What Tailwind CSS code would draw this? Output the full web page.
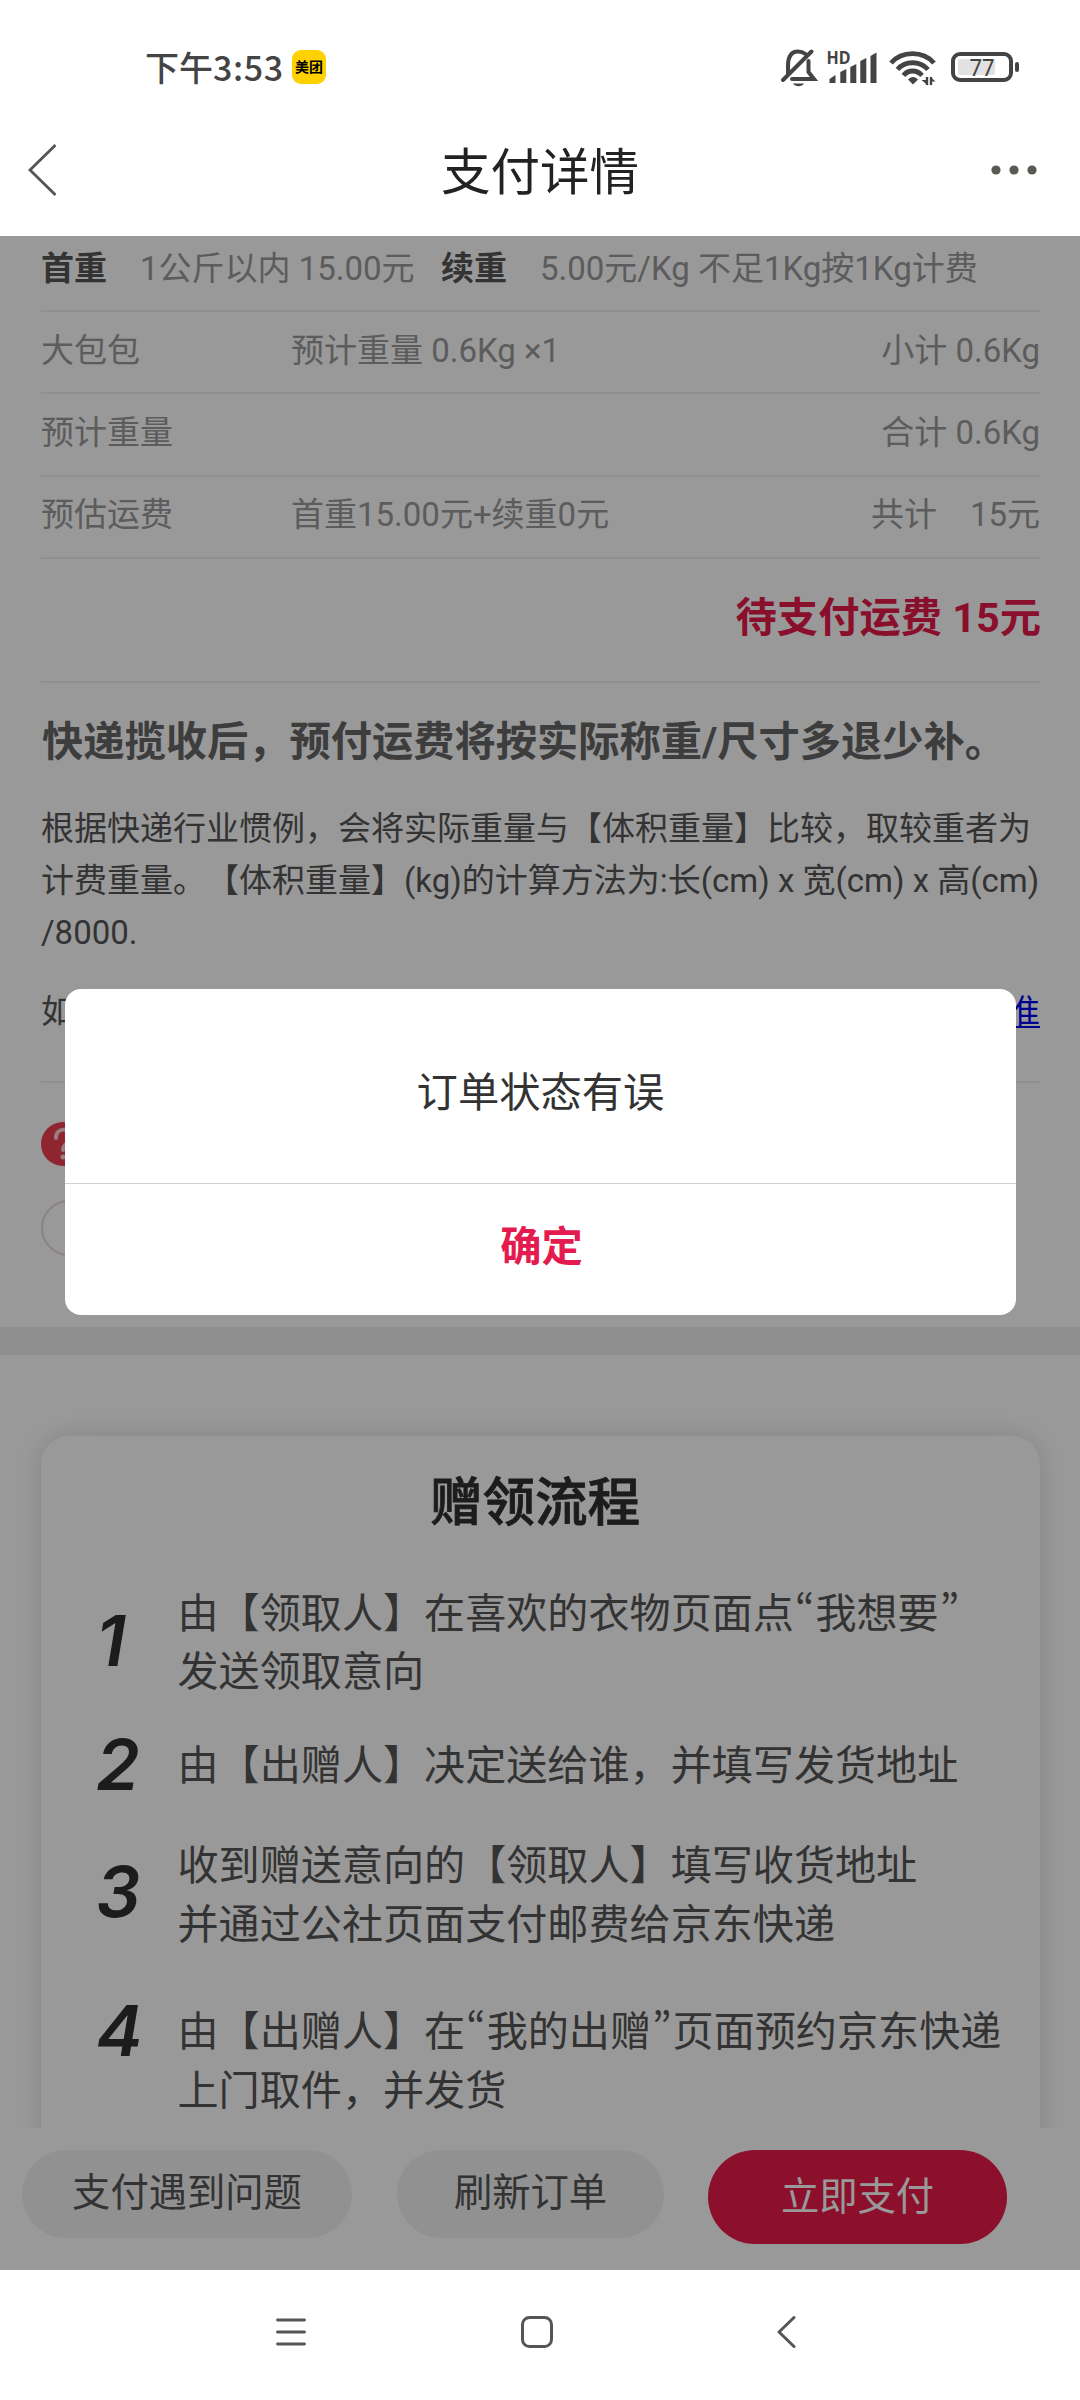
<!DOCTYPE html>
<html lang="zh-CN">
<head>
<meta charset="utf-8">
<title>支付详情</title>
<script src="https://cdn.jsdelivr.net/npm/@tailwindcss/browser@4"></script>
</head>
<body class="w-[1080px] h-[2400px] overflow-hidden bg-white font-['Roboto','Noto_Sans_CJK_SC',sans-serif] [text-spacing-trim:space-all] flex flex-col">

<!-- Status bar -->
<header class="h-[236px] shrink-0 bg-white flex flex-col">
  <div class="h-[104px] pt-[30px] pl-[145px] pr-[60px] flex items-center justify-between text-[#444]">
    <div class="flex items-center gap-[9px]">
      <span class="font-['Noto_Sans_CJK_SC',sans-serif] font-medium text-[34px] leading-[40px] w-[138px] whitespace-nowrap">下午<span class="tracking-[0.6px]">3:53</span></span>
      <span class="size-[34px] rounded-[9px] bg-[#ffd100] text-black text-[14px] leading-[33px] font-bold text-center font-['Noto_Sans_CJK_SC',sans-serif]">美团</span>
    </div>
    <svg class="w-[240px] h-[40px]" viewBox="780 47 240 40" fill="none" stroke="#444" stroke-width="4" stroke-linecap="round">
      <path d="M788 74V66C788 56 792 51.500 798 51.500C801 51.500 803.500 52.500 805.500 54M808.500 61V72L814 79H792"/>
      <path d="M783 80L811.500 51.500"/>
      <path d="M793 83.500H804C802 87 795 87 793 83.500Z" fill="#444" stroke="none"/>
      <text x="826.500" y="63.500" font-size="17" font-weight="700" font-family="Noto Sans" fill="#444" stroke="none" textLength="24" lengthAdjust="spacingAndGlyphs">HD</text>
      <g fill="#444" stroke="none">
        <path d="M829.500 79L835.500 75V83H829.500Z"/>
        <path d="M840.300 72L846.300 69V83H840.300Z"/>
        <path d="M850.300 67L856.300 64V83H850.300Z"/>
        <path d="M860.300 61L866.300 58V83H860.300Z"/>
        <path d="M870.500 56L876.500 52.500V83H870.500Z"/>
      </g>
      <g stroke-width="4.800" stroke-linecap="butt">
        <path d="M891 63C902 50.500 923 50.500 934 63"/>
        <path d="M897.500 69.500C905 60.500 920 60.500 928 69.500"/>
        <path d="M903.500 75.500C908 69.500 917 69.500 922 75.500"/>
      </g>
      <path d="M908 79.500C911 76 915 76 918 79.500L913 84.500Z" fill="#444" stroke="none"/>
      <path d="M927 77V85M931 85V77" stroke-width="2.400" stroke-linecap="butt"/>
      <path d="M928 85.500L921.500 80H928ZM930 76.500L935.500 81.500H930Z" fill="#444" stroke="none"/>
      <rect x="958" y="59" width="37" height="16" rx="2" fill="#e2e2e2" stroke="none"/>
      <rect x="953" y="54" width="58" height="26" rx="7"/>
      <rect x="1015" y="62" width="4" height="10" rx="2" fill="#444" stroke="none"/>
      <text x="969.500" y="75.500" font-size="23" font-family="Noto Sans" fill="#444" stroke="none" textLength="25" lengthAdjust="spacingAndGlyphs">77</text>
    </svg>
  </div>
  <div class="h-[132px] pl-[28px] pr-[43px] flex items-center justify-between">
    <svg class="w-[28px] h-[52px]" viewBox="0 0 28 52" fill="none" stroke="#555" stroke-width="2.800"><path d="M27.500 1L2 26L27.500 51"/></svg>
    <h1 class="text-[49.500px] leading-[60px] text-[#222] pl-[33px] pt-[6px]">支付详情</h1>
    <svg class="w-[46px] h-[10px]" viewBox="0 0 46 10" fill="#5a5a55"><circle cx="5" cy="5" r="4.600"/><circle cx="23" cy="5" r="4.600"/><circle cx="41" cy="5" r="4.600"/></svg>
  </div>
</header>

<main class="relative h-[2034px] shrink-0 overflow-hidden bg-white flex flex-col">
  <section class="px-[40px] pl-[41px] h-[1091px] shrink-0 text-[33px] leading-[52px] text-[#999]">
    <div class="h-[76px] border-b-2 border-[#eee] flex pt-[7px] whitespace-nowrap">
      <b class="w-[99px] text-[#555]">首重</b><span class="w-[301px]">1公斤以内 15.00元</span><b class="w-[99px] text-[#555]">续重</b><span>5.00元/Kg 不足1Kg按1Kg计费</span>
    </div>
    <div class="h-[82px] border-b-2 border-[#eee] flex items-center pb-[2px]"><span class="w-[250px]">大包包</span><span>预计重量 0.6Kg ×1</span><span class="ml-auto">小计 0.6Kg</span></div>
    <div class="h-[83px] border-b-2 border-[#eee] flex items-center pb-[3px]"><span>预计重量</span><span class="ml-auto">合计 0.6Kg</span></div>
    <div class="h-[82px] border-b-2 border-[#eee] flex items-center pb-[4px]"><span class="w-[250px]">预估运费</span><span>首重15.00元+续重0元</span><span class="ml-auto">共计<span class="ml-[33px]">15元</span></span></div>
    <div class="h-[124px] border-b-2 border-[#eee] flex items-center justify-end pb-[5px] text-[41.300px] font-bold text-[#e6194b]"><span class="-mr-px">待支付运费 15元</span></div>
    <h2 class="pt-[32px] pl-px text-[41.250px] leading-[54px] font-bold text-[#666] whitespace-nowrap">快递揽收后，预付运费将按实际称重/尺寸多退少补。</h2>
    <p class="pt-[34px] text-[#555] whitespace-nowrap">根据快递行业惯例，会将实际重量与【体积重量】比较，取较重者为<br>计费重量。【体积重量】(kg)的计算方法为:长(cm) x 宽(cm) x 高(cm)<br>/8000.</p>
    <div class="mt-[27px] h-[97px] border-b-2 border-[#eee] flex justify-between text-[#555]"><span>如</span><a class="text-[#0000ee] underline decoration-2 underline-offset-[3px]">准</a></div>
    <div class="mt-[39px] size-[44px] rounded-full bg-[#ef3e50]">
      <svg class="size-[44px]" viewBox="0 0 44 44" fill="none" stroke="#fcd5d8" stroke-width="4" stroke-linecap="round"><path d="M15 16C15 5 30 5 30 15C30 21 22 21 22 28"/><circle cx="22" cy="35" r="2.500" fill="#fcd5d8" stroke="none"/></svg>
    </div>
    <div class="mt-[34px] w-[240px] h-[56px] rounded-full border-2 border-[#ead8d8]"></div>
  </section>
  <div class="h-[28px] shrink-0 bg-[#eee]"></div>

  <section class="mt-[81px] ml-[41px] mr-[40px] h-[800px] shrink-0 rounded-[28px] shadow-[0_0_24px_rgba(0,0,0,0.14)] text-[41.100px] leading-[58.500px] text-[#555] whitespace-nowrap">
    <h2 class="pt-[32px] pr-[11px] text-center text-[52.500px] leading-[70px] font-medium text-[#2f2f2f] [-webkit-text-stroke:0.8px_#2f2f2f]">赠领流程</h2>
    <ol class="pt-[45px]">
      <li class="flex items-center h-[117px]"><b class="w-[136.500px] pl-[55px] font-['Inter'] italic font-semibold text-[70px] text-[#2f2f2f]">1</b><p class="pt-[3px]">由【领取人】在喜欢的衣物页面点<span class="inline-block w-[21.500px] text-center font-['Noto_Sans_CJK_SC'] leading-[1] [font-feature-settings:'pwid']">“</span>我想要<span class="inline-block w-[21.500px] text-center font-['Noto_Sans_CJK_SC'] leading-[1] [font-feature-settings:'pwid']">”</span><br>发送领取意向</p></li>
      <li class="flex items-center h-[59px] mt-[36px]"><b class="w-[136.500px] pl-[55px] font-['Inter'] italic font-semibold text-[70px] text-[#2f2f2f]">2</b><p class="pt-[2px]">由【出赠人】决定送给谁，并填写发货地址</p></li>
      <li class="flex items-center h-[117px] mt-[41px]"><b class="w-[136.500px] pl-[55px] pb-[4px] font-['Inter'] italic font-semibold text-[70px] text-[#2f2f2f]">3</b><p class="pt-[2px]">收到赠送意向的【领取人】填写收货地址<br>并通过公社页面支付邮费给京东快递</p></li>
      <li class="flex items-start h-[117px] mt-[48px]"><b class="w-[136.500px] pl-[55px] pt-px font-['Inter'] italic font-semibold text-[70px] text-[#2f2f2f]">4</b><p class="pt-[2px]">由【出赠人】在<span class="inline-block w-[21.500px] text-center font-['Noto_Sans_CJK_SC'] leading-[1] [font-feature-settings:'pwid']">“</span>我的出赠<span class="inline-block w-[21.500px] text-center font-['Noto_Sans_CJK_SC'] leading-[1] [font-feature-settings:'pwid']">”</span>页面预约京东快递<br>上门取件，并发货</p></li>
    </ol>
  </section>

  <!-- Bottom actions -->
  <div class="absolute inset-x-0 bottom-0 h-[142px] bg-white pt-[22px] pl-[22px] flex items-start text-[38.300px] text-[#555]">
    <button class="w-[330px] h-[88px] rounded-full bg-[#f2f2f2] pb-[2px]">支付遇到问题</button>
    <button class="ml-[45px] w-[267px] h-[88px] rounded-full bg-[#f2f2f2] pb-[2px]">刷新订单</button>
    <button class="ml-[44px] w-[299px] h-[94px] rounded-full bg-[#e91a4a] text-white">立即支付</button>
  </div>

  <!-- Modal -->
  <div class="absolute inset-0 bg-black/40">
    <div role="dialog" class="absolute left-[65px] top-[753px] w-[951px] h-[326px] rounded-[16px] bg-white text-[41.300px] text-center flex flex-col">
      <p class="h-[195px] border-b border-[#d0d0d0] pt-[70px] leading-[68px] text-[#333]">订单状态有误</p>
      <button class="flex-1 font-bold text-[#e31b4f] pb-[4px] pl-[2px]">确定</button>
    </div>
  </div>
</main>

<!-- System navigation -->
<nav class="h-[130px] shrink-0 bg-white pl-[275px] pr-[284px] pb-[6px] flex items-center justify-between">
  <svg class="w-[32px] h-[34px]" viewBox="0 0 32 34" stroke="#555" stroke-width="2.800" stroke-linecap="round"><path d="M2.500 5H29.500M2.500 17H29.500M2.500 29H29.500"/></svg>
  <svg class="w-[34px] h-[34px] mr-[10px]" viewBox="0 0 34 34" fill="none" stroke="#555" stroke-width="3"><rect x="2.500" y="2.500" width="29" height="29" rx="7"/></svg>
  <svg class="w-[20px] h-[34px]" viewBox="0 0 20 34" fill="none" stroke="#555" stroke-width="3" stroke-linecap="round" stroke-linejoin="round"><path d="M18 2.500L3 17L18 31.500"/></svg>
</nav>
</body>
</html>
